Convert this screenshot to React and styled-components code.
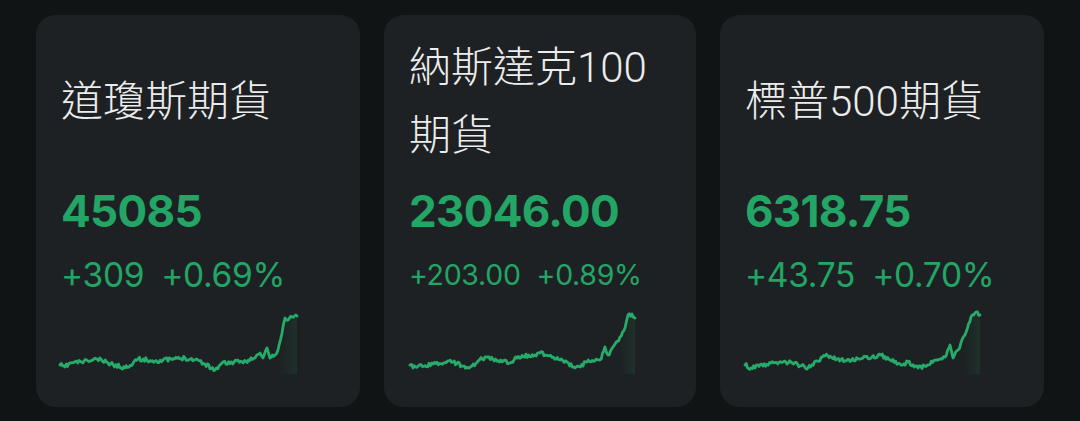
import React from "react";
import styled, { createGlobalStyle } from "styled-components";

const GlobalStyle = createGlobalStyle`
  html, body { margin: 0; padding: 0; background: #111415; }
  body { width: 1080px; height: 421px; overflow: hidden; }
`;

const Row = styled.div`
  display: flex;
  gap: 24px;
  padding: 15px 36px 0;
`;

const Card = styled.div`
  box-sizing: border-box;
  width: ${(p) => p.$w}px;
  height: 392px;
  flex: none;
  background: #1e2123;
  border-radius: 20px;
  padding: 18px 25px 0;
  display: flex;
  flex-direction: column;
`;

const TitleBox = styled.div`
  height: 137px;
  display: flex;
  align-items: center;
`;

const Title = styled.div`
  font-family: Roboto, "Noto Sans CJK TC", sans-serif;
  font-size: 42px;
  line-height: 68px;
  color: #ececec;
  font-weight: 300;
`;

const Price = styled.div`
  margin-top: 15px;
  font-family: Inter, Roboto, sans-serif;
  font-weight: 700;
  font-size: 44px;
  line-height: 52px;
  color: #22a565;
  letter-spacing: -0.7px;
`;

const Change = styled.div`
  margin-top: 18px;
  display: flex;
  gap: ${(p) => p.$gap}px;
  font-family: Inter, Roboto, sans-serif;
  font-weight: 400;
  font-size: ${(p) => p.$size}px;
  line-height: 40px;
  color: #22a565;
  letter-spacing: -0.3px;
`;

const ChartSvg = styled.svg`
  display: block;
  margin: 15px 0 0 -2px;
  overflow: visible;
`;

function rng(seed) {
  let s = seed;
  return () => {
    s = (s * 16807) % 2147483647;
    return (s - 1) / 2147483646;
  };
}

function buildSeries(keys, seed, ox, oy) {
  const r = rng(seed);
  const pts = [];
  for (let i = 0; i < keys.length - 1; i++) {
    const [x0, y0] = keys[i];
    const [x1, y1] = keys[i + 1];
    const steps = Math.max(1, Math.round((x1 - x0) / 1.3));
    for (let k = 0; k < steps; k++) {
      const t = k / steps;
      const x = x0 + (x1 - x0) * t;
      let y = y0 + (y1 - y0) * t;
      if (k > 0) y += (r() - 0.5) * 4.2;
      pts.push([x - ox, y - oy]);
    }
  }
  const last = keys[keys.length - 1];
  pts.push([last[0] - ox, last[1] - oy]);
  return pts;
}

function Chart({ keys, seed, left, id }) {
  const top = 310;
  const pts = buildSeries(keys, seed, left, top);
  const d = pts.map((p, i) => `${i ? "L" : "M"}${p[0].toFixed(1)},${p[1].toFixed(1)}`).join(" ");
  const lastX = pts[pts.length - 1][0];
  const firstX = pts[0][0];
  const area = `${d} L${lastX.toFixed(1)},64 L${firstX.toFixed(1)},64 Z`;
  return (
    <ChartSvg width="242" height="64" viewBox="0 0 242 64">
      <defs>
        <linearGradient id={`h${id}`} x1={firstX} x2={lastX} y1="0" y2="0" gradientUnits="userSpaceOnUse">
          <stop offset="0" stopColor="#22a565" stopOpacity="0" />
          <stop offset="0.93" stopColor="#22a565" stopOpacity="0" />
          <stop offset="1" stopColor="#22a565" stopOpacity="0.12" />
        </linearGradient>
      </defs>
      <path d={area} fill={`url(#h${id})`} />
      <path d={d} fill="none" stroke="#27ab6b" strokeWidth="2.8" strokeLinejoin="round" strokeLinecap="round" />
    </ChartSvg>
  );
}

const cards = [
  {
    w: 324,
    title: "道瓊斯期貨",
    price: "45085",
    change: "+309",
    pct: "+0.69%",
    size: 33.5,
    gap: 17,
    left: 59,
    seed: 11,
    keys: [
      [60, 365], [65, 367], [70, 363], [88, 361], [97, 359], [108, 363], [125, 368],
      [138, 359], [155, 361], [185, 358], [198, 360], [205, 364], [215, 370], [222, 363],
      [242, 362], [255, 358], [260, 353], [263, 358], [267, 348], [270, 358], [275, 355],
      [278, 350], [282, 333], [285, 318], [288, 320], [292, 317], [297, 316],
    ],
  },
  {
    w: 312,
    title: "納斯達克100 期貨",
    price: "23046.00",
    change: "+203.00",
    pct: "+0.89%",
    size: 28.5,
    gap: 16,
    left: 407,
    seed: 23,
    keys: [
      [410, 365], [413, 368], [433, 364], [453, 362], [468, 368], [485, 357], [510, 363],
      [517, 358], [540, 353], [560, 360], [567, 362], [575, 368], [587, 362], [600, 360],
      [605, 347], [608, 355], [613, 347], [620, 337], [625, 328], [628, 315], [632, 314], [635, 318],
    ],
  },
  {
    w: 324,
    title: "標普500期貨",
    price: "6318.75",
    change: "+43.75",
    pct: "+0.70%",
    size: 33.5,
    gap: 17,
    left: 743,
    seed: 37,
    keys: [
      [745, 365], [751, 368], [771, 363], [791, 362], [808, 368], [825, 356], [845, 361],
      [881, 355], [901, 365], [908, 362], [918, 368], [938, 360], [945, 357], [950, 345],
      [953, 358], [958, 350], [965, 335], [971, 317], [975, 313], [980, 315],
    ],
  },
];

export default function App() {
  return (
    <>
      <GlobalStyle />
      <Row>
        {cards.map((c, i) => (
          <Card key={i} $w={c.w}>
            <TitleBox>
              <Title>{c.title}</Title>
            </TitleBox>
            <Price>{c.price}</Price>
            <Change $size={c.size} $gap={c.gap}>
              <span>{c.change}</span>
              <span>{c.pct}</span>
            </Change>
            <Chart keys={c.keys} seed={c.seed} left={c.left} id={i} />
          </Card>
        ))}
      </Row>
    </>
  );
}
